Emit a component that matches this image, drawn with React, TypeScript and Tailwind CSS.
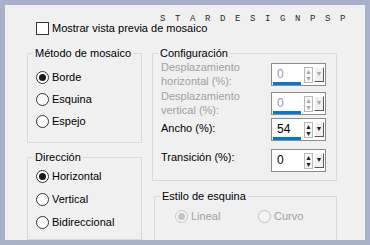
import React from 'react'

function Radio({ label, checked, disabled }: { label: string; checked?: boolean; disabled?: boolean }) {
  return (
    <div className="flex items-center gap-[3px]">
      <span
        className={`w-[13px] h-[13px] rounded-full border flex items-center justify-center ${
          disabled ? 'border-[#c4c4c4] bg-[#f4f4f4]' : 'border-[#333333] bg-white'
        }`}
      >
        {checked && (
          <span className={`w-[7px] h-[7px] rounded-full ${disabled ? 'bg-[#c4c4c4]' : 'bg-[#1a1a1a]'}`} />
        )}
      </span>
      <span className={disabled ? 'text-[#a0a0a0]' : 'text-black'}>{label}</span>
    </div>
  )
}

function SpinBox({ value, disabled, bar = true }: { value: string; disabled?: boolean; bar?: boolean }) {
  const arrow = disabled ? 'text-[#a8a8a8]' : 'text-[#202020]'
  return (
    <div className="relative w-[55px] h-[23px] border border-[#8c8c8c] bg-white flex">
      <div className="w-[32px] flex flex-col">
        <span className={`pl-[5px] pt-[3px] leading-[14px] text-[12px] ${disabled ? 'text-[#a094bc]' : 'text-black'}`}>
          {value}
        </span>
        {bar && <div className="ml-[1px] mt-[1px] w-[28px] h-[3px] bg-[#0078d7]" />}
      </div>
      <div className="mt-[3px] w-[9px] h-[16px] flex flex-col border border-[#b8b8b8] bg-[#f8f8f8]">
        <div className={`h-[7px] flex items-center justify-center text-[7px] leading-none ${arrow}`}>▲</div>
        <div className="h-[1px] bg-[#b8b8b8]" />
        <div className={`flex-1 flex items-center justify-center text-[7px] leading-none ${arrow}`}>▼</div>
      </div>
      <div className="ml-[1px] mt-[3px] w-[10px] h-[15px] bg-[#f0f0f0] border-t border-l border-t-white border-l-white border-r border-b border-r-[#5a5a5a] border-b-[#5a5a5a] flex justify-center">
        <span className={`pt-[2px] text-[7px] leading-none ${arrow}`}>▼</span>
      </div>
    </div>
  )
}

function Group({ title, className, children }: { title: string; className?: string; children: React.ReactNode }) {
  return (
    <fieldset className={`border border-[#d9d9d9] ${className ?? ''}`}>
      <legend className="ml-[5px] px-[2px] leading-[15px] text-black">{title}</legend>
      {children}
    </fieldset>
  )
}

export default function App() {
  return (
    <div
      className="w-[370px] h-[245px] bg-[#a7b2c9] p-[5px] text-[11px]"
      style={{ fontFamily: '"Liberation Sans", Arial, sans-serif' }}
    >
      <div className="relative w-[360px] h-[235px] bg-[#f0f0f0] overflow-hidden">
        {/* watermark */}
        <div
          className="absolute top-[8px] left-[155px] text-[9px] tracking-[9.6px] text-[#2a2a2a]"
          style={{ fontFamily: '"Liberation Mono", monospace' }}
        >
          STARDESIGNPSP
        </div>

        {/* preview checkbox */}
        <div className="pt-[16px] pl-[31px] flex items-center gap-[3px] h-[30px]">
          <span className="w-[13px] h-[13px] border border-[#333333] bg-white" />
          <span className="text-black">Mostrar vista previa de mosaico</span>
        </div>

        <div className="mt-[11px] ml-[22px] flex gap-[10px]">
          {/* left column */}
          <div className="w-[115px] flex flex-col gap-[7px]">
            <Group title="Método de mosaico" className="h-[97px]">
              <div className="mt-[5px] pl-[8px] flex flex-col">
                <div className="h-[22px] flex items-center"><Radio label="Borde" checked /></div>
                <div className="h-[22px] flex items-center"><Radio label="Esquina" /></div>
                <div className="h-[22px] flex items-center"><Radio label="Espejo" /></div>
              </div>
            </Group>
            <Group title="Dirección" className="h-[90px]">
              <div className="pl-[8px] flex flex-col">
                <div className="h-[23px] flex items-center"><Radio label="Horizontal" checked /></div>
                <div className="h-[23px] flex items-center"><Radio label="Vertical" /></div>
                <div className="h-[23px] flex items-center"><Radio label="Bidireccional" /></div>
              </div>
            </Group>
          </div>

          {/* right column */}
          <div className="w-[185px] flex flex-col gap-[8px]">
            <Group title="Configuración" className="h-[135px]">
              <div className="pl-[8px] pr-[10px] flex flex-col">
                <div className="h-[30px] flex justify-between items-start">
                  <div className="-mt-[1px] leading-[14px] text-[#a0a0a0]">
                    Desplazamiento<br />horizontal (%):
                  </div>
                  <div className="mt-[2px]"><SpinBox value="0" disabled /></div>
                </div>
                <div className="h-[26px] flex justify-between items-start">
                  <div className="-mt-[2px] leading-[14px] text-[#a0a0a0]">
                    Desplazamiento<br />vertical (%):
                  </div>
                  <div className="mt-[1px]"><SpinBox value="0" disabled /></div>
                </div>
                <div className="h-[28px] flex justify-between items-start">
                  <div className="mt-[4px] leading-[14px] text-black">Ancho (%):</div>
                  <div className="mt-[1px]"><SpinBox value="54" /></div>
                </div>
                <div className="h-[30px] flex justify-between items-start">
                  <div className="mt-[5px] leading-[14px] text-black">Transición (%):</div>
                  <div className="mt-[4px]"><SpinBox value="0" bar={false} /></div>
                </div>
              </div>
            </Group>
            <Group title="Estilo de esquina" className="ml-[2px] h-[62px]">
              <div className="pl-[20px] h-[24px] flex items-center">
                <div className="w-[83px]"><Radio label="Lineal" checked disabled /></div>
                <Radio label="Curvo" disabled />
              </div>
            </Group>
          </div>
        </div>
      </div>
    </div>
  )
}
